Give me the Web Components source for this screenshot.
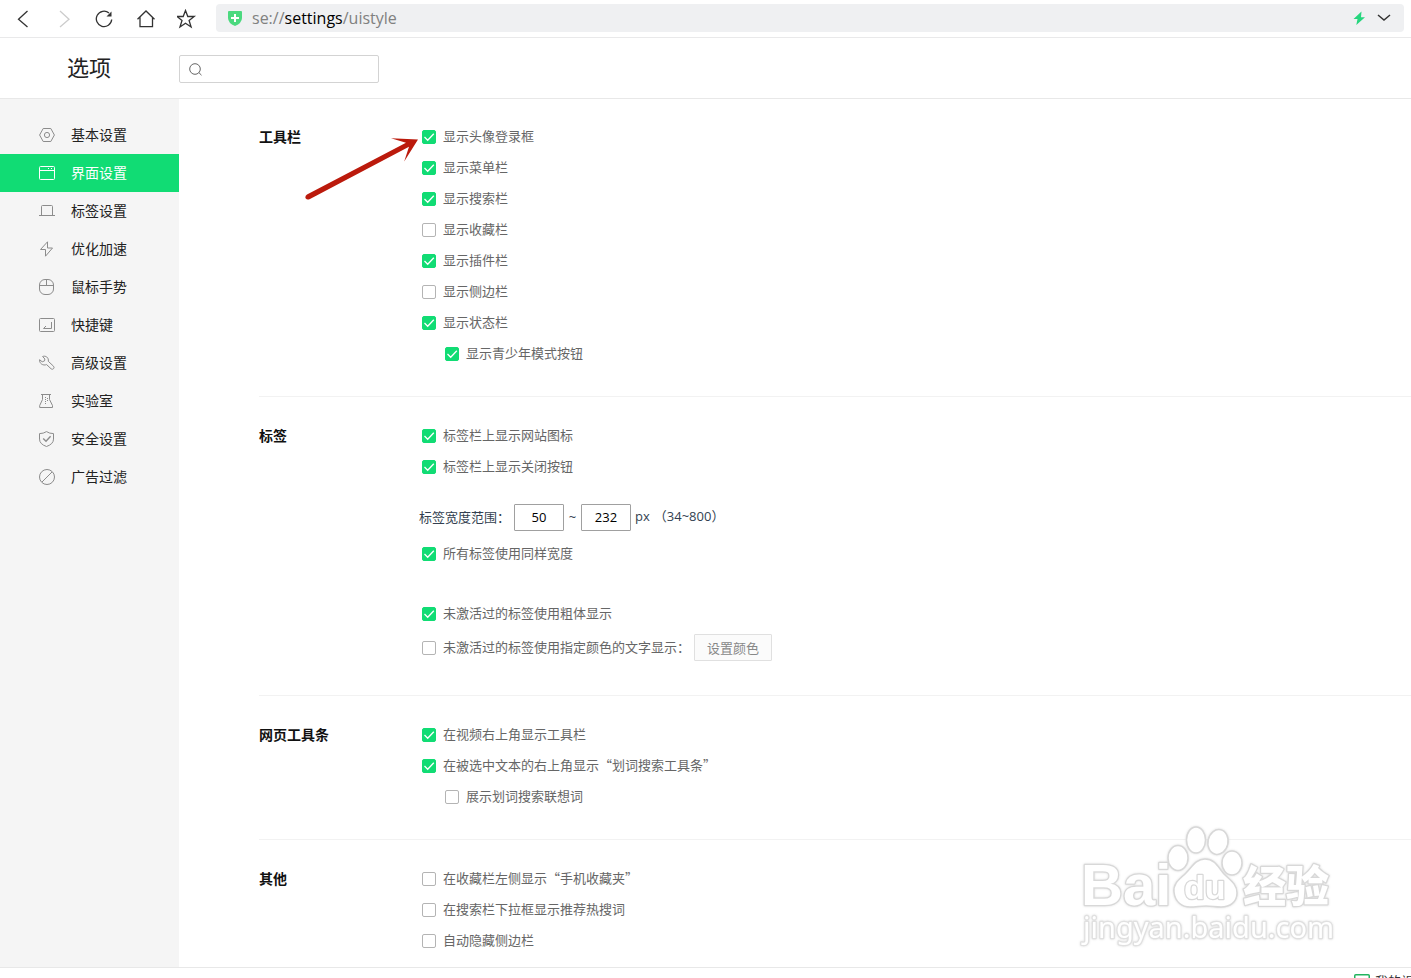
<!DOCTYPE html>
<html lang="zh-CN">
<head>
<meta charset="utf-8">
<title>选项 - 界面设置</title>
<style>
  html, body { margin: 0; height: 100%; }
  body {
    overflow: hidden;
    background: #fff;
    color: #222;
    font: 13px/14px "Open Sans", "Noto Sans CJK SC", sans-serif;
  }
</style>
</head>
<body>
<settings-app></settings-app>
<script>
class BaseElement extends HTMLElement {
  connectedCallback() {
    if (this.shadowRoot) return;
    this.attachShadow({ mode: 'open' }).innerHTML =
      '<style>*{box-sizing:border-box}' + this.css() + '</style>' + this.html();
  }
  css() { return ''; }
  html() { return '<slot></slot>'; }
}

const ICONS = {
  gear: '<path d="M4.2 1.5h7.6L15.4 8l-3.6 6.5H4.2L.6 8z"/><circle cx="8" cy="8" r="2.6"/>',
  window: '<rect x=".5" y="1.5" width="15" height="13" rx="1"/><path d="M.5 5.5h15M9 3.500h1M12 3.500h1"/>',
  laptop: '<path d="M2.500 12.500v-9q0-1 1-1h9q1 0 1 1v9M0 12.500h16"/>',
  bolt: '<path d="M8.500 .8L1.500 8.500h5v6.700l7-8.200h-5z"/>',
  mouse: '<rect x=".5" y=".5" width="14" height="15" rx="5.500"/><path d="M.5 6.500h14M7.500 .5v6"/>',
  key: '<rect x=".5" y="1.500" width="15" height="13" rx="1"/><path d="M12.500 5v6.500h-8l2.500-2.500"/>',
  wrench: '<path d="M3.600 1.500C6.500.3 10 2.500 9.300 6.300l5.200 4.900q1 1.200.2 2.300-1.100 1.300-2.500.4L7.600 9.600C4 11 .2 8.500.6 4.700l2.600 2.100 2.300-.9.400-1.900z"/>',
  flask: '<path d="M2 1.500h10M3.500 1.500v5L.7 12.500v2h12.800v-2l-3-6v-5"/><path stroke-dasharray="1 1" d="M6.500 4v8M8.500 5v3"/>',
  shield: '<path d="M7.500 .6q3 2 7 2v5.500q0 5-7 7.400-7-2.400-7-7.400V2.600q4 0 7-2z"/><path stroke-width="1.4" d="M4.200 7.400L7 10.200l4.600-5"/>',
  block: '<circle cx="8" cy="8" r="7.500"/><path d="M3 13L13 3"/>'
};

/* Sidebar entry */
customElements.define('nav-item', class extends BaseElement {
  css() { return `
    :host { display: block; color: #222; --stroke: #8c8c8c; }
    :host([active]) { background: #11dc74; color: #fff; --stroke: #fff; }
    a { display: flex; align-items: center; gap: 16px; height: 38px; padding-left: 39px;
        color: inherit; text-decoration: none; font-size: 14px; line-height: 20px; white-space: nowrap; }
    svg { flex: none; fill: none; stroke: var(--stroke); }`; }
  html() { return `<a href="#${this.getAttribute('icon')}">
    <svg width="16" height="16" viewBox="0 0 16 16" aria-hidden="true">${ICONS[this.getAttribute('icon')]}</svg><span><slot></slot></span></a>`; }
});

/* Labelled tick box */
customElements.define('check-option', class extends BaseElement {
  css() { return `
    :host { display: block; padding-left: 3px; color: #666; font-family: "Noto Sans CJK SC", sans-serif; }
    :host([nested]) { padding-left: 26px; }
    label { display: flex; align-items: center; gap: 7px; white-space: nowrap; }
    span { line-height: 12px; padding-bottom: 2px; }
    input { appearance: none; flex: none; width: 14px; height: 14px; margin: 0; border: 1px solid #b4b4b4; border-radius: 2px; background: #fff; }
    input:checked { border-color: #11dc74; background: #11dc74 url("data:image/svg+xml,%3Csvg xmlns='http://www.w3.org/2000/svg' width='12' height='12' fill='none' stroke='white' stroke-width='1.3'%3E%3Cpath d='M1.500 6L4.700 9.200L10.800 2.800'/%3E%3C/svg%3E") center no-repeat; }`; }
  html() { return `<label><input type="checkbox"${this.hasAttribute('checked') ? ' checked' : ''}><span><slot></slot></span></label>`; }
});

/* Titled group of options */
customElements.define('settings-section', class extends BaseElement {
  css() { return `
    :host { display: grid; grid-template-columns: 160px 1fr; position: relative; padding: 32px 0 35px; border-bottom: 1px solid #f2f2f2; }
    :host(:first-of-type) { padding-top: 31px; }
    :host(:last-of-type) { padding-bottom: 19px; border: 0; }
    h2 { margin: 0; font-size: 14px; line-height: 14px; font-weight: 700; color: #111; }
    .rows { display: flex; flex-direction: column; gap: 17px; }`; }
  html() { return `<h2>${this.getAttribute('heading')}</h2><div class="rows"><slot></slot></div><slot name="note"></slot>`; }
});

/* Minimum and maximum tab width */
customElements.define('tab-width-range', class extends BaseElement {
  css() { return `
    :host { display: flex; align-items: center; height: 27px; margin: 13px 0 -1px; color: #333f50; white-space: nowrap; }
    input { width: 50px; height: 27px; padding: 0 0 2px; border: 1px solid #a0a0a0; border-radius: 1px; background: #fff; color: #000; font: inherit; text-align: center; }
    label { margin-right: 4px; }
    label, span { padding-bottom: 2px; }
    .tilde { width: 17px; text-align: center; }
    .unit { display: flex; gap: 4px; margin-left: 4px; }`; }
  html() { return `<label for="min">标签宽度范围：</label><input id="min" value="50"><span class="tilde">~</span><input aria-label="最大宽度" value="232"><span class="unit"><span>px</span><span>（34~800）</span></span>`; }
});

customElements.define('color-row', class extends BaseElement {
  css() { return `
    :host { display: flex; align-items: center; gap: 4px; height: 27px; margin: -4px 0 -1px; }
    button { width: 78px; height: 27px; padding: 0; border: 1px solid #e0e0e0; border-radius: 1px; background: #fbfbfb; color: #888; font: inherit; }`; }
  html() { return `<check-option>未激活过的标签使用指定颜色的文字显示：</check-option><button type="button">设置颜色</button>`; }
});

/* Red pointer towards the first option */
customElements.define('pointer-arrow', class extends BaseElement {
  css() { return `:host { position: absolute; left: 46px; top: 38px; pointer-events: none; } svg { display: block; }`; }
  html() { return `<svg width="116" height="64" viewBox="0 0 116 64" aria-hidden="true"><path fill="#bb1a0c" d="M113 2.500L86 1.200 101 5.700 2 57.500Q-.5 59.500 .8 61.600 2.200 63.200 5 61.900L104 9.800 99.200 24.500z"/></svg>`; }
});

customElements.define('browser-bar', class extends BaseElement {
  css() { return `
    :host { display: flex; align-items: flex-start; height: 38px; padding: 4px 7px 0 2px; border-bottom: 1px solid #e9e9ea; }
    nav { display: flex; margin-right: 9px; }
    button { display: grid; place-items: center; width: 41px; height: 30px; padding: 0; border: 0; background: none; }
    svg { display: block; fill: none; stroke: #333; stroke-width: 1.3; }
    .faded { stroke: #ccc; }
    .address { flex: 1; display: flex; align-items: center; height: 28px; padding: 0 8px 0 11px; border-radius: 4px; background: #eff0f2; color: #808080; font-size: 16px; line-height: 22px; }
    .address a { flex: 1; margin-left: 9px; color: inherit; text-decoration: none; }
    b { font-weight: 400; color: #000; }
    .address button { width: 25px; height: 28px; }
    .fill { stroke: none; }`; }
  html() { return `
    <nav>
      <button aria-label="后退"><svg width="20" height="20"><path d="M14.500 2L5.500 10.300 14.500 18"/></svg></button>
      <button aria-label="前进"><svg class="faded" width="20" height="20"><path d="M6 2l9 8.300L6 18"/></svg></button>
      <button aria-label="刷新"><svg width="20" height="20"><path d="M14 4A7.700 7.700 0 1 0 16.700 10.500"/><path class="fill" style="fill:#333" d="M16.500 2.500v5h-5z"/></svg></button>
      <button aria-label="主页"><svg width="20" height="20"><path d="M1.500 10.200L10 2l8.500 8.200M4 8v9.700h12.500V8"/></svg></button>
      <button aria-label="收藏"><svg width="20" height="20"><path d="M8.500 1.500l2.300 6h6.400l-5.100 4 2 6.500-5.600-3.800L3 18l2-6.500-5-4h6.200z"/></svg></button>
    </nav>
    <div class="address">
      <svg class="fill" width="16" height="16"><path fill="#4bd97f" d="M2 1h12q1 0 1 1v6q0 5-7 8-7-3-7-8V2q0-1 1-1z"/><path fill="#fff" d="M7 4h2v3h3v2H9v3H7V9H4V7h3z"/></svg>
      <a href="#uistyle">se://<b>settings</b>/uistyle</a>
      <button aria-label="加速"><svg class="fill" width="14" height="14"><path fill="#26d67e" d="M9.500 .5L1.500 8h4L4.300 14 13 6.200H9z"/></svg></button>
      <button aria-label="展开"><svg width="14" height="14" style="stroke-width:1.5"><path d="M1 4l6 5 6-5"/></svg></button>
    </div>`; }
});

customElements.define('page-header', class extends BaseElement {
  css() { return `
    :host { display: flex; align-items: center; height: 61px; padding: 2px 0 0 67px; border-bottom: 1px solid #e8e8e8; }
    h1 { width: 112px; margin: 0; padding-bottom: 4px; font-size: 22px; line-height: 28px; font-weight: 400; color: #222; }
    label { display: flex; align-items: center; width: 200px; height: 28px; padding-left: 9px; border: 1px solid #d3d3d3; border-radius: 2px; }
    svg { flex: none; fill: none; stroke: #666; }
    input { flex: 1; min-width: 0; height: 24px; padding: 0 6px; border: 0; outline: 0; background: none; font: inherit; }`; }
  html() { return `<h1>选项</h1><label><svg width="14" height="14" aria-hidden="true"><circle cx="6" cy="7" r="5.300"/><path d="M9.800 10.500l2.700 2.700"/></svg><input type="search" aria-label="搜索"></label>`; }
});

customElements.define('side-nav', class extends BaseElement {
  css() { return `:host { display: block; flex: none; width: 179px; padding-top: 17px; background: #f5f5f5; }`; }
  html() { return `<nav><slot></slot></nav>`; }
});

customElements.define('status-bar', class extends BaseElement {
  css() { return `
    :host { display: flex; justify-content: flex-end; height: 30px; padding-top: 6px; border-top: 1px solid #e8e8e8; overflow: hidden; background: #fff; }
    a { display: flex; gap: 5px; width: 57px; color: #333; text-decoration: none; white-space: nowrap; line-height: 14px; }
    svg { flex: none; fill: none; stroke: #22b45f; stroke-width: 1.5; }`; }
  html() { return `<a href="#video"><svg width="16" height="14" aria-hidden="true"><rect x=".75" y=".75" width="14.500" height="12" rx="1"/></svg><span>我的视频</span></a>`; }
});

/* Logo laid over the lower right of the page */
customElements.define('site-watermark', class extends BaseElement {
  css() { return `
    :host { position: absolute; right: 70px; bottom: 31px; pointer-events: none; }
    svg { display: block; overflow: visible; filter: drop-shadow(0 0 1px #ddd); }
    g { fill: #fff; stroke: #d8d8d8; stroke-width: 1.5; stroke-linejoin: round; }
    text { paint-order: stroke; stroke-width: 2.5; }
    .url { stroke: #e0e0e0; }`; }
  html() { return `<svg width="261" height="128" viewBox="0 0 261 128">
    <g>
      <ellipse cx="98" cy="39" rx="10" ry="12.500"/><ellipse cx="116" cy="21" rx="9.500" ry="13"/>
      <ellipse cx="138" cy="23" rx="10" ry="12.500" transform="rotate(12 138 23)"/><ellipse cx="152" cy="44" rx="10" ry="12"/>
      <path d="M125 40c-9 0-13 8-19 14-6 6-13 10-12 19 1 10 8 15 16 15 6 0 10-1 16-1s9 1 15 1c9 0 16-5 16-14s-7-13-13-19c-6-7-9-15-19-15z"/>
      <text x="1" y="86" font-family="Liberation Sans" font-weight="700" font-size="58">Bai</text>
      <text x="104" y="80" font-family="Liberation Sans" font-weight="700" font-size="34">du</text>
      <text x="163" y="83" font-family="Noto Sans CJK SC" font-weight="900" font-size="43">经验</text>
      <text class="url" x="3" y="119" font-family="Noto Sans" font-size="29">jingyan.baidu.com</text>
    </g></svg>`; }
});

customElements.define('settings-app', class extends BaseElement {
  css() { return `
    :host { display: block; position: relative; height: 100vh; overflow: hidden; }
    .body { display: flex; }
    main { flex: 1; min-width: 0; padding-left: 80px; }
    .spaced { margin-top: 29px; }`; }
  html() { return `
    <browser-bar></browser-bar>
    <page-header></page-header>
    <div class="body">
      <side-nav>
        <nav-item icon="gear">基本设置</nav-item>
        <nav-item icon="window" active>界面设置</nav-item>
        <nav-item icon="laptop">标签设置</nav-item>
        <nav-item icon="bolt">优化加速</nav-item>
        <nav-item icon="mouse">鼠标手势</nav-item>
        <nav-item icon="key">快捷键</nav-item>
        <nav-item icon="wrench">高级设置</nav-item>
        <nav-item icon="flask">实验室</nav-item>
        <nav-item icon="shield">安全设置</nav-item>
        <nav-item icon="block">广告过滤</nav-item>
      </side-nav>
      <main>
        <settings-section heading="工具栏">
          <check-option checked>显示头像登录框</check-option>
          <check-option checked>显示菜单栏</check-option>
          <check-option checked>显示搜索栏</check-option>
          <check-option>显示收藏栏</check-option>
          <check-option checked>显示插件栏</check-option>
          <check-option>显示侧边栏</check-option>
          <check-option checked>显示状态栏</check-option>
          <check-option checked nested>显示青少年模式按钮</check-option>
          <pointer-arrow slot="note"></pointer-arrow>
        </settings-section>
        <settings-section heading="标签">
          <check-option checked>标签栏上显示网站图标</check-option>
          <check-option checked>标签栏上显示关闭按钮</check-option>
          <tab-width-range></tab-width-range>
          <check-option checked>所有标签使用同样宽度</check-option>
          <check-option checked class="spaced">未激活过的标签使用粗体显示</check-option>
          <color-row></color-row>
        </settings-section>
        <settings-section heading="网页工具条">
          <check-option checked>在视频右上角显示工具栏</check-option>
          <check-option checked>在被选中文本的右上角显示“划词搜索工具条”</check-option>
          <check-option nested>展示划词搜索联想词</check-option>
        </settings-section>
        <settings-section heading="其他">
          <check-option>在收藏栏左侧显示“手机收藏夹”</check-option>
          <check-option>在搜索栏下拉框显示推荐热搜词</check-option>
          <check-option>自动隐藏侧边栏</check-option>
        </settings-section>
      </main>
    </div>
    <status-bar></status-bar>
    <site-watermark></site-watermark>`; }
});
</script>
</body>
</html>
